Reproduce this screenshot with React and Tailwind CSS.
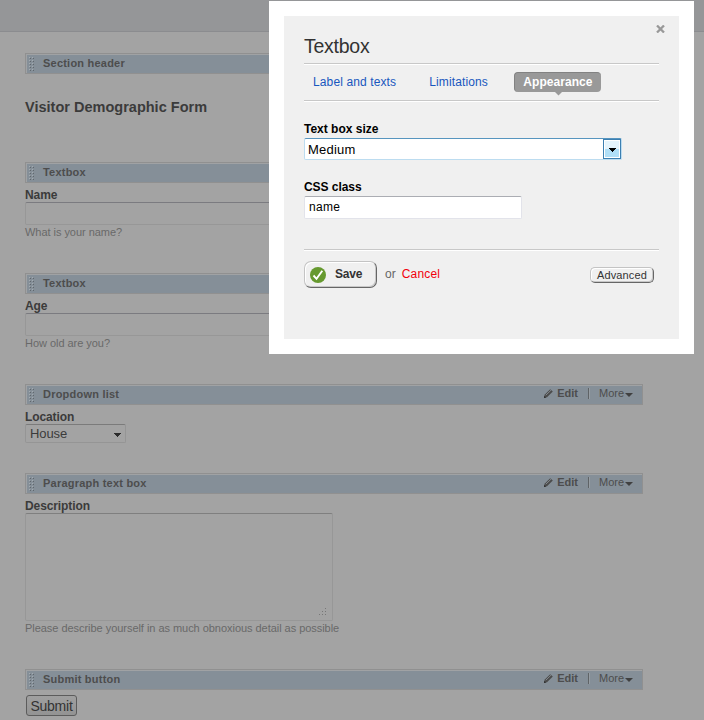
import React, { useState } from 'react';

const GripDots = () => (
  <svg width="6" height="15" viewBox="0 0 6 15" shapeRendering="crispEdges" className="shrink-0">
    {[0, 3, 6, 9, 12].map((y) => (
      <g key={y}>
        <rect x="0" y={y} width="1" height="1" fill="#a3abb1" />
        <rect x="1" y={y + 1} width="1" height="1" fill="#60676d" />
        <rect x="3" y={y} width="1" height="1" fill="#a3abb1" />
        <rect x="4" y={y + 1} width="1" height="1" fill="#60676d" />
      </g>
    ))}
  </svg>
);

const Pencil = () => (
  <svg width="9" height="9" viewBox="0 0 9 9">
    <path d="M0.2 8.8 L0.6 5.8 L6.2 0.3 L8.8 2.6 L3 8.3 Z" fill="#4b4b4b" />
    <path d="M1.8 6.2 L7 1.2" stroke="#92999f" strokeWidth="0.8" />
    <path d="M0 9 V6.8 L2.2 8.8 Z" fill="#303030" />
  </svg>
);

const Caret = ({ className }) => (
  <svg width="7" height="4" viewBox="0 0 7 4" shapeRendering="crispEdges" className={className}>
    <path d="M0 0 H7 V1 H6 V2 H5 V3 H4 V4 H3 V3 H2 V2 H1 V1 H0 Z" fill="currentColor" />
  </svg>
);

const WidgetBar = ({ title, actions = false }) => (
  <div className="flex h-[21px] w-[618px] border border-[#909090]">
    <div className="flex grow items-start border-t border-l border-[#a0a2a4] bg-[#858f98] pl-[2px] text-[11px] leading-[13px] text-[#4d4d4d]">
      <div className="mt-[2px] flex">
        <GripDots />
      </div>
      <span className="ml-[8px] mt-[2px] font-bold tracking-[0.22px]">{title}</span>
      {actions && (
        <div className="ml-auto mr-[9px] flex">
          <div className="mt-[3px]">
            <Pencil />
          </div>
          <span className="ml-[4px] mt-px font-bold">Edit</span>
          <span className="ml-[10px] mt-[2px] h-[11px] w-px bg-[#5f6366]" />
          <span className="mt-[2px] h-[11px] w-px bg-[#969da3]" />
          <span className="ml-[9px] mt-px w-[25px]">More</span>
          <svg width="8" height="4" viewBox="0 0 8 4" className="ml-px mt-[7px]">
            <path d="M0 0 H8 L4 4 Z" fill="#404040" />
          </svg>
        </div>
      )}
    </div>
  </div>
);

const Label = ({ children }) => (
  <div className="mt-[5px] h-[14px] text-[12px] font-bold leading-[14px] tracking-[-0.1px] text-[#3b3b3b]">{children}</div>
);

const Hint = ({ children }) => (
  <div className="mt-px whitespace-nowrap text-[11px] leading-[13px] tracking-[-0.04px] text-[#696969]">{children}</div>
);

const FormPage = () => (
  <div className="h-[720px] bg-[#a3a3a3]">
    <div className="h-[32px] border-b border-[#8b8c8f] bg-[#959698]" />
    <div className="pl-[25px] pt-[21px]">
      <section className="h-[109px]">
        <WidgetBar title="Section header" />
        <h1 className="mt-[25px] text-[14.5px] font-bold leading-[17px] tracking-[0.01px] text-[#3b3b3b]">
          Visitor Demographic Form
        </h1>
      </section>
      <section className="h-[111px]">
        <WidgetBar title="Textbox" />
        <Label>Name</Label>
        <div className="h-[23px] w-[318px] rounded-[2px] border border-[#979797] border-t-[#7b7b80]" />
        <Hint>What is your name?</Hint>
      </section>
      <section className="h-[111px]">
        <WidgetBar title="Textbox" />
        <Label>Age</Label>
        <div className="h-[23px] w-[318px] rounded-[2px] border border-[#979797] border-t-[#7b7b80]" />
        <Hint>How old are you?</Hint>
      </section>
      <section className="h-[89px]">
        <WidgetBar title="Dropdown list" actions />
        <Label>Location</Label>
        <div className="flex h-[19px] w-[101px] items-start justify-between rounded-[2px] border border-[#959595] border-t-[#7b7b7b] pl-[4px] pr-[4px] text-[13px] leading-[18px] text-[#3b3b3b]">
          <span className="-tracking-[0.1px]">House</span>
          <Caret className="mt-[8px] text-[#2b2b2b]" />
        </div>
      </section>
      <section className="h-[196px]">
        <WidgetBar title="Paragraph text box" actions />
        <Label>Description</Label>
        <div className="flex h-[108px] w-[308px] items-end justify-end rounded-[2px] border border-[#979797] border-t-[#7f7f7f] pr-[5px] pb-[4px]">
          <svg width="9" height="9" viewBox="0 0 9 9" shapeRendering="crispEdges" fill="#777">
            <path d="M7 1h1v1h-1zM7 4h1v1h-1zM4 4h1v1h-1zM7 7h1v1h-1zM4 7h1v1h-1zM1 7h1v1h-1z" />
          </svg>
        </div>
        <Hint>Please describe yourself in as much obnoxious detail as possible</Hint>
      </section>
      <section>
        <WidgetBar title="Submit button" actions />
        <button className="ml-px mt-[5px] block h-[21px] w-[51px] rounded-[3px] border border-[#5c5c5c] bg-linear-to-b from-[#a0a0a0] to-[#939393] text-[14px] leading-[20px] tracking-[-0.25px] text-[#333]">
          Submit
        </button>
      </section>
    </div>
  </div>
);

const Divider = () => (
  <div className="h-[2px] border-t border-b border-t-[#c8c8c8] border-b-white" />
);

const tabs = ['Label and texts', 'Limitations', 'Appearance'];

const TextboxDialog = () => {
  const [activeTab, setActiveTab] = useState('Appearance');

  return (
    <div className="absolute left-[269px] top-px h-[353px] w-[425px] bg-white p-[15px]">
      <div className="relative h-[323px] bg-[#f0f0f0] px-[20px] pt-[20px]">
        <button className="absolute right-[14px] top-[9px]" aria-label="Close">
          <svg width="9" height="8" viewBox="0 0 9 8" className="block">
            <path d="M1 0.5 L8 7.5 M8 0.5 L1 7.5" stroke="#999" strokeWidth="2.3" />
          </svg>
        </button>
        <h2 className="h-[27px] text-[19.5px] leading-[20px] tracking-[-0.25px] text-[#333]">Textbox</h2>
        <div className="w-[355px]">
          <Divider />
          <div className="flex h-[35px] items-start pt-[7px] text-[12px] leading-[20px]">
            {tabs.map((tab) => (
              <button
                key={tab}
                onClick={() => setActiveTab(tab)}
                className={
                  tab === activeTab
                    ? 'relative ml-[2px] h-[20px] w-[87px] rounded-[4px] border-t border-l border-[#828282] bg-[#999] font-bold leading-[19px] tracking-[0.05px] text-white'
                    : 'mr-[15px] h-[20px] px-[9px] tracking-[0.12px] text-[#1857be]'
                }
              >
                {tab}
                {tab === activeTab && (
                  <svg width="7" height="4" viewBox="0 0 7 4" className="absolute left-[40px] top-[19px]">
                    <path d="M0 0 H7 L3.5 3.5 Z" fill="#999" />
                  </svg>
                )}
              </button>
            ))}
          </div>
          <Divider />
        </div>
        <div className="mt-[20px] text-[12px] font-bold leading-[14px] text-black">Text box size</div>
        <div className="mt-[2px] flex h-[22px] w-[318px] justify-between rounded-[2px] border border-[#bcdcf0] border-t-[#5795bf] bg-white text-[13px] leading-[21px] text-black">
          <span className="ml-[3px] tracking-[0.2px]">Medium</span>
          <span className="flex h-[20px] w-[18px] border border-[#3c7fb1] bg-white p-px">
            <span className="flex grow items-center justify-center bg-linear-to-b from-[#e5f4fc] from-50% to-[#b0dff7] to-50%">
              <Caret className="mt-[2px] text-black" />
            </span>
          </span>
        </div>
        <div className="mt-[20px] text-[12px] font-bold leading-[14px] tracking-[-0.05px] text-black">CSS class</div>
        <div className="mt-[2px] h-[23px] w-[218px] rounded-[2px] border border-[#e2e3ea] border-t-[#abadb3] bg-white pl-[4px] text-[12px] leading-[20px] tracking-[0.3px] text-black">
          name
        </div>
        <div className="mt-[30px] w-[355px]">
          <Divider />
        </div>
        <div className="mt-[10px] flex text-[12px]">
          <button className="flex h-[27px] w-[73px] items-center rounded-[7px] border border-[#c4c4c4] border-r-[#666] border-b-[#666] bg-[#f0f0f0] pl-[5px] font-bold text-[#333] shadow-[inset_1px_1px_0_#fff,inset_-1px_-1px_0_#c8c8c8]">
            <svg width="16" height="16" viewBox="0 0 16 16">
              <circle cx="8" cy="8" r="8" fill="#66992f" />
              <path d="M3.5 8.5 L6.5 11.8 L12.3 3.7" fill="none" stroke="#fff" strokeWidth="1.9" />
            </svg>
            <span className="mb-px ml-[9px] tracking-[-0.2px]">Save</span>
          </button>
          <span className="ml-[8px] mt-[5px] leading-[16px] text-[#666]">or</span>
          <span className="ml-[6px] mt-[5px] leading-[16px] tracking-[0.2px] text-[#f2000c]">Cancel</span>
          <button className="ml-auto mr-[5px] mt-[6px] h-[16px] w-[64px] rounded-[5px] border border-[#c4c4c4] border-r-[#666] border-b-[#666] bg-[#f0f0f0] text-[11px] leading-[13px] tracking-[0.15px] text-[#333] shadow-[inset_1px_1px_0_#fff,inset_-1px_-1px_0_#c8c8c8]">
            Advanced
          </button>
        </div>
      </div>
    </div>
  );
};

const App = () => (
  <div className="relative h-[720px] w-[704px] overflow-hidden font-['Liberation_Sans',Arial,sans-serif]">
    <FormPage />
    <TextboxDialog />
  </div>
);

export default App;
